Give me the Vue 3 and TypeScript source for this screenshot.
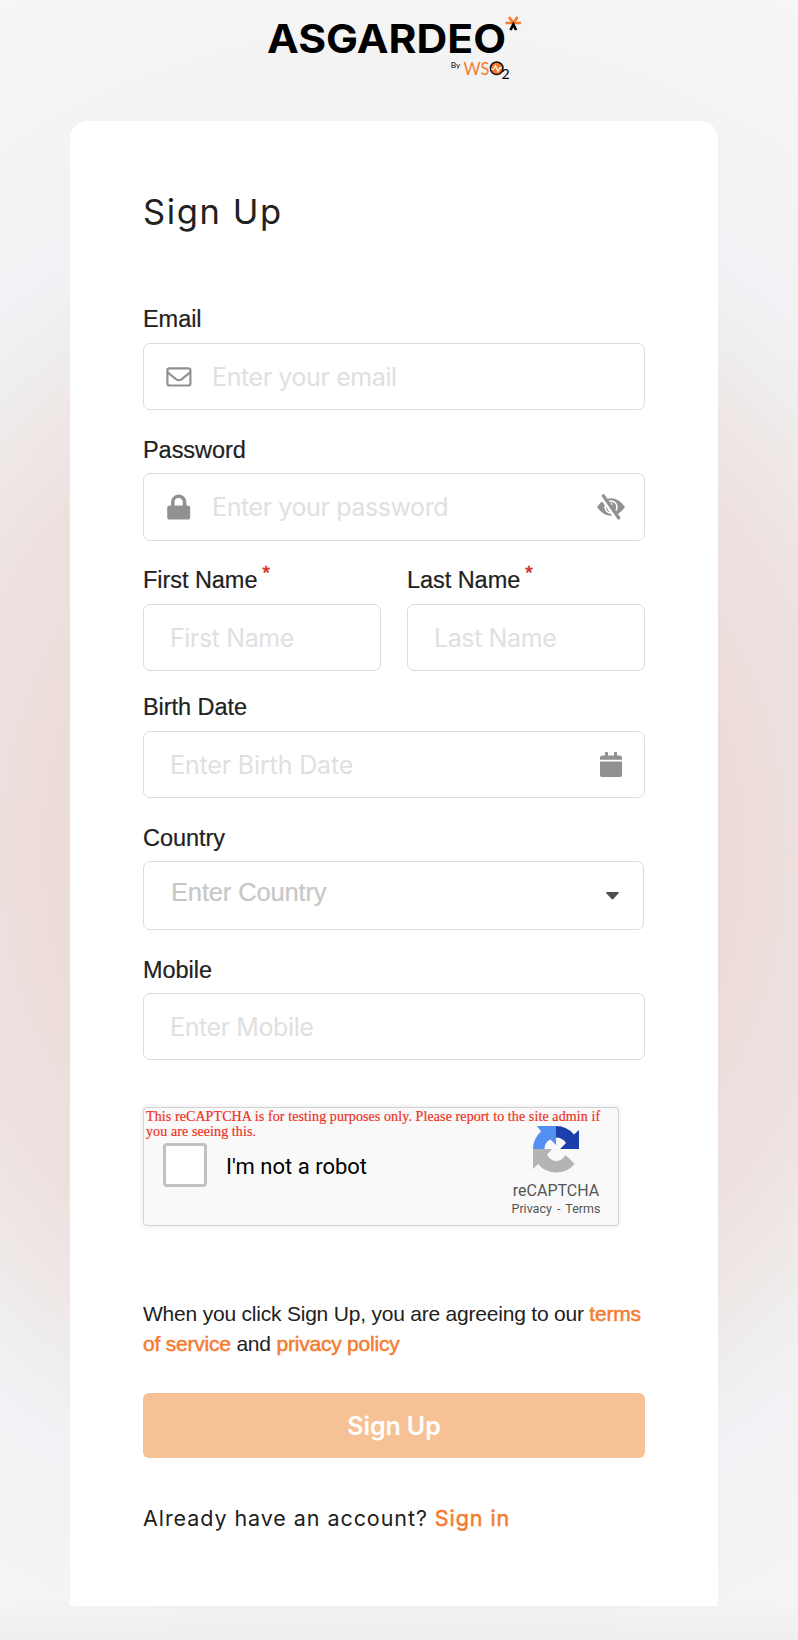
<script setup lang="ts">
import { ref } from 'vue'

interface NameField {
  id: string
  label: string
}

const nameFields: NameField[] = [
  { id: 'first', label: 'First Name' },
  { id: 'last', label: 'Last Name' },
]

const email = ref('')
const password = ref('')
const birthDate = ref('')
const mobile = ref('')
const names = ref<Record<string, string>>({ first: '', last: '' })
</script>

<template>
  <div class="page">
    <header class="brand">
      <svg class="logo" width="260" height="70" viewBox="264 14 260 70">
        <text class="wordmark" x="267" y="52.7" textLength="239" lengthAdjust="spacingAndGlyphs">ASGARDEO</text>
        <g fill="none" stroke-width="2.7">
          <path d="M505.5 23H521M509 17l4.3 6 4.3-6" stroke="#f47b30" />
          <path d="M510.5 30l2.8-5.5 2.8 5.5" stroke="#000" />
        </g>
        <text class="by" x="450.8" y="68" textLength="9.5" lengthAdjust="spacingAndGlyphs">By</text>
        <text class="ws" x="463.5" y="75" textLength="26" lengthAdjust="spacingAndGlyphs">WS</text>
        <circle cx="496.7" cy="68.3" r="6.3" fill="#f47b30" stroke="#111" stroke-width="1.5" />
        <path d="M491 69.3h2.6l1.9-3.6 2.4 5.6 1.8-3.4h2.2" fill="none" stroke="#fff" stroke-width="1.1" />
        <text class="two" x="501.5" y="79">2</text>
      </svg>
    </header>

    <main class="card">
      <h1><span>Sign Up</span></h1>

      <div class="field">
        <label for="email">Email</label>
        <div class="box">
          <svg class="lead" width="26" height="20" viewBox="0 0 26 20">
            <g fill="none" stroke="#919191" stroke-width="2.2">
              <rect x="1.4" y="1.3" width="23" height="17.2" rx="2" />
              <path d="M1.6 5.4l8.7 6.9q2.6 1.8 5.2 0l8.7-6.9" />
            </g>
          </svg>
          <input id="email" v-model="email" type="email" placeholder="Enter your email" />
        </div>
      </div>

      <div class="field">
        <label for="password" class="low">Password</label>
        <div class="box box-password">
          <svg class="lead" width="26" height="26" viewBox="0 0 26 26">
            <path d="M6.8 12V8.2a5.9 5.9 0 0 1 11.8 0V12" fill="none" stroke="#919191" stroke-width="3.6" />
            <rect x="1.2" y="11.5" width="23" height="14" rx="2.6" fill="#919191" />
          </svg>
          <input id="password" v-model="password" type="password" placeholder="Enter your password" />
          <svg class="eye" width="30" height="28" viewBox="0 0 30 28">
            <path d="M1 14Q7 5.2 15 5.2T29 14Q23 22.8 15 22.8T1 14Z" fill="#919191" />
            <circle cx="15" cy="14" r="6" fill="none" stroke="#fff" stroke-width="1.5" />
            <path d="M15.2 9.8a2.5 2.5 0 0 1-3.7 3.2" fill="none" stroke="#fff" stroke-width="1.6" />
            <path d="M5 4.2L20.5 26.5" stroke="#fff" stroke-width="3" />
            <path d="M7.4 2.8L22.8 25" stroke="#919191" stroke-width="3.2" stroke-linecap="round" />
          </svg>
        </div>
      </div>

      <div class="names">
        <div v-for="field in nameFields" :key="field.id" class="name">
          <label :for="field.id">{{ field.label }}<span class="required">*</span></label>
          <div class="box">
            <input :id="field.id" v-model="names[field.id]" :placeholder="field.label" />
          </div>
        </div>
      </div>

      <div class="field">
        <label for="birth">Birth Date</label>
        <div class="box">
          <input id="birth" v-model="birthDate" class="birth" placeholder="Enter Birth Date" />
          <svg class="calendar" width="22" height="26" viewBox="0 0 22 26">
            <path d="M5 4V1.3q0-1 1-1h1q1 0 1 1V4h6V1.3q0-1 1-1h1q1 0 1 1V4h2.5Q22 4 22 6v2.2H0V6Q0 4 2.5 4ZM0 10h22v13.3q0 2.2-2.3 2.2H2.3Q0 25.5 0 23.3Z" transform="translate(0 -.4)" fill="#919191" />
          </svg>
        </div>
      </div>

      <div class="field">
        <label class="low">Country</label>
        <div class="box box-country" role="combobox" tabindex="0">
          <span class="country">Enter Country</span>
          <svg class="caret" width="13" height="8" viewBox="0 0 13 8">
            <path d="M0 .9Q0 0 1 0h11q1 0 .8.9L7.3 7q-.8.8-1.6 0Z" fill="#4f4f4f" />
          </svg>
        </div>
      </div>

      <div class="field">
        <label for="mobile" class="low">Mobile</label>
        <div class="box">
          <input id="mobile" v-model="mobile" placeholder="Enter Mobile" />
        </div>
      </div>

      <section class="captcha">
        <p class="notice">This reCAPTCHA is for testing purposes only. Please report to the site admin if you are seeing this.</p>
        <span class="check" role="checkbox" aria-checked="false"></span>
        <span class="robot">I'm not a robot</span>
        <div class="captcha-brand">
          <svg width="46" height="47" viewBox="0 0 46 47">
            <path d="M23 0Q34 0 41 8.5L46 4V23H27l6-6Q29.5 11.5 23 11.5Z" fill="#1c3fa9" />
            <path d="M23 0V19l-5.5-5.5Q11.5 16 11.5 23H0Q0 12.5 8 5.5L4 0Z" fill="#5490f1" />
            <path d="M0 23H19l-4.800 5.5Q17 35 23 35q5.5 0 9.5-6l9 8.7Q35 46.5 23 46.5 12 46.5 5 38L0 43Z" fill="#b4b4b4" />
          </svg>
          <span class="rc-name">reCAPTCHA</span>
          <span class="rc-links"><span>Privacy</span><span>-</span><span>Terms</span></span>
        </div>
      </section>

      <p class="agree">When you click Sign Up, you are agreeing to our <a>terms<br />of service</a> and <a>privacy policy</a></p>

      <button class="submit" type="button">Sign Up</button>

      <p class="signin"><span>Already have an account?</span> <a>Sign in</a></p>
    </main>
  </div>
</template>

<style>
body {
  margin: 0;
}
</style>

<style scoped>
.page {
  box-sizing: border-box;
  height: 1640px;
  padding: 0 80px 34px 70px;
  overflow: hidden;
  background:
    linear-gradient(to top, rgba(234, 234, 234, 0.6), rgba(243, 243, 243, 0) 40px),
    radial-gradient(ellipse 631px 690px at 394px 853px, #ebdad7 0%, #ebdad7 50%, #eddfdd 63%, #ede2e0 73%, #efe7e6 81%, #efecec 89%, #f2f2f6 101%, #f3f3f3 113%, #f5f6f5 138%);
  color: #212121;
  font-family: "Liberation Sans", Arial, sans-serif;
}

.brand {
  display: flex;
  height: 121px;
  padding: 14px 0 0 194px;
  box-sizing: border-box;
}

.wordmark {
  font: 700 39.5px Inter, sans-serif;
}

.by {
  font: 8px Lato, sans-serif;
}

.ws {
  font: 400 18px Lato, sans-serif;
  fill: #f47b30;
}

.two {
  font: 14px Lato, sans-serif;
}

.card {
  box-sizing: border-box;
  height: 1485px;
  width: 648px;
  padding: 64px 73px 0;
  background: #fff;
  border-radius: 18px 18px 0 0;
}

h1 {
  height: 120px;
  margin: 0;
  font: 400 34.5px/54px Inter, sans-serif;
  letter-spacing: 1.6px;
}

label {
  display: block;
  height: 28px;
  margin-bottom: 10px;
  font-size: 23.5px;
  line-height: 28px;
  letter-spacing: -0.05px;
  -webkit-text-stroke: 0.2px #212121;
  white-space: nowrap;
}

label.low {
  line-height: 30px;
}

.field {
  margin-bottom: 25px;
}

.required {
  margin-left: 5px;
  color: #d0342c;
  font-size: 19px;
  line-height: 0;
  vertical-align: 9px;
  -webkit-text-stroke: 0.6px #d0342c;
}

.box {
  box-sizing: border-box;
  display: flex;
  align-items: center;
  height: 67px;
  padding: 0 18px 0 26px;
  border: 1px solid #dcdcdc;
  border-radius: 7px;
  background: #fff;
}

.box-password {
  height: 68px;
}

.box-country {
  width: 501px;
  height: 69px;
}

.lead {
  flex: none;
  margin: 0 20px 0 -4px;
}

input {
  flex: 1;
  min-width: 0;
  padding: 0;
  border: 0;
  outline: 0;
  background: none;
  color: #212121;
  font: 25px Inter, sans-serif;
  letter-spacing: -0.4px;
}

input.birth {
  letter-spacing: -0.15px;
}

input::placeholder {
  color: #e0e0e0;
  opacity: 1;
}

.calendar {
  flex: none;
  margin-right: 4px;
}

.names {
  display: grid;
  grid-template-columns: 238px 238px;
  column-gap: 26px;
  margin-bottom: 22px;
}

.country {
  flex: 1;
  padding: 0 0 7px 1px;
  color: #c7c7c7;
  font-size: 25.5px;
  letter-spacing: -0.15px;
  -webkit-text-stroke: 0.2px #c7c7c7;
}

.caret {
  flex: none;
  margin-right: 6px;
}

.captcha {
  position: relative;
  box-sizing: border-box;
  display: flex;
  width: 476px;
  height: 119px;
  margin-top: 47px;
  padding-left: 19px;
  border: 1px solid #d3d3d3;
  border-radius: 4px;
  background: #f9f9f9;
  box-shadow: 0 0 5px 1px rgba(0, 0, 0, 0.08);
}

.notice {
  position: absolute;
  top: 1px;
  left: 2px;
  width: 462px;
  margin: 0;
  color: #ee3124;
  font: 14px/15px "Liberation Serif", "Times New Roman", serif;
  letter-spacing: 0.1px;
  -webkit-text-stroke: 0.2px #ee3124;
}

.check {
  box-sizing: border-box;
  width: 44px;
  height: 44px;
  margin-top: 35px;
  border: 3px solid #c1c1c1;
  border-radius: 4px;
  background: #fff;
}

.robot {
  margin: 46px 0 0 19px;
  color: #000;
  font: 22px/26px Roboto, sans-serif;
}

.captcha-brand {
  display: flex;
  flex-direction: column;
  align-items: center;
  width: 100px;
  margin: 18px 12px 0 auto;
  color: #555;
  font-family: Roboto, sans-serif;
}

.rc-name {
  margin-top: 8px;
  font-size: 16px;
  line-height: 20px;
}

.rc-links {
  display: flex;
  gap: 5px;
  font-size: 12.5px;
  line-height: 16px;
}

a {
  color: #f47b30;
  -webkit-text-stroke: 0.5px #f47b30;
}

.agree {
  height: 60px;
  margin: 73px 0 0;
  font-size: 21px;
  line-height: 30px;
  letter-spacing: -0.21px;
  white-space: nowrap;
}

.submit {
  display: block;
  width: 502px;
  height: 65px;
  margin-top: 34px;
  padding: 0;
  border: 0;
  border-radius: 6px;
  background: #f6c194;
  color: #fff;
  font: 600 25px Inter, sans-serif;
  letter-spacing: -0.1px;
}

.signin {
  margin: 45px 0 0;
  font: 400 21.5px/30px Inter, sans-serif;
  letter-spacing: 0.93px;
  white-space: nowrap;
}
</style>
